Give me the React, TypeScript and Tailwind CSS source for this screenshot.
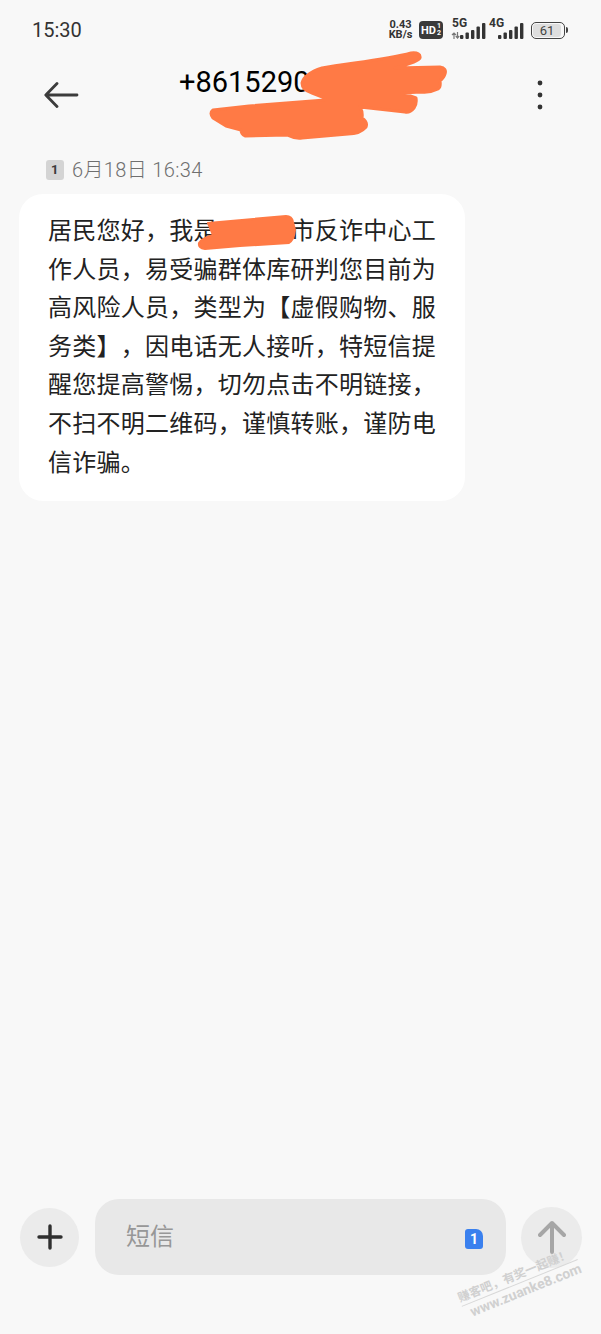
const CJK = "font-['Roboto','Noto_Sans_CJK_SC',sans-serif]";

function Bars() {
  return (
    <svg width="26" height="16" viewBox="0 0 26 16" fill="#333">
      <rect x="0" y="12" width="3.4" height="4" rx="1" />
      <rect x="5.5" y="9.5" width="3.4" height="6.5" rx="1" />
      <rect x="11" y="7" width="3.4" height="9" rx="1" />
      <rect x="16.5" y="3.5" width="3.4" height="12.5" rx="1" />
      <rect x="22" y="0" width="3.4" height="16" rx="1" />
    </svg>
  );
}

function StatusBar() {
  return (
    <div className="h-[60px] flex items-center justify-between pl-[32px] pr-[33px] shrink-0">
      <span className="text-[20px] text-[#333] font-['Roboto',sans-serif] leading-none">15:30</span>
      <div className="flex items-center h-[24px] text-[#333] font-['Roboto',sans-serif]">
        <div className="w-[25px] flex flex-col items-center text-[11px] font-bold leading-[10.5px] mr-[6px]">
          <span>0.43</span>
          <span>KB/s</span>
        </div>
        <div className="w-[24px] h-[18px] rounded-[4px] bg-[#3a3a3a] text-white flex items-center justify-center text-[11px] font-bold leading-none mr-[8px]">
          HD
          <span className="flex flex-col text-[7px] leading-[7px] ml-[1px]">
            <span>1</span>
            <span>2</span>
          </span>
        </div>
        <div className="relative w-[34px] h-[24px] mr-[4px]">
          <span className="absolute left-[1px] top-[-1px] text-[12px] font-bold leading-[12px]">5G</span>
          <svg className="absolute left-0 top-[14px]" width="9" height="7" viewBox="0 0 9 7" fill="none" stroke="#777" strokeWidth="1.2">
            <path d="M3 7V1M1 3l2-2 2 2M6.5 0v6M4.8 4l1.7 2L8.2 4" />
          </svg>
          <div className="absolute left-[9px] top-[5px]"><Bars /></div>
        </div>
        <div className="relative w-[34px] h-[24px] mr-[8px]">
          <span className="absolute left-0 top-[-1px] text-[12px] font-bold leading-[12px]">4G</span>
          <div className="absolute left-[9px] top-[5px]"><Bars /></div>
        </div>
        <div className="flex items-center">
          <div className="w-[34px] h-[17px] rounded-[5px] border border-[#444] p-[1px]">
            <div className="w-[28px] h-full rounded-[3px] bg-[#dedede] flex items-center justify-center text-[13px] leading-none text-[#444]">
              61
            </div>
          </div>
          <div className="w-[2px] h-[6px] bg-[#444] rounded-r-sm ml-[1px]" />
        </div>
      </div>
    </div>
  );
}

function Header() {
  return (
    <div className="relative h-[96px] shrink-0 flex items-start justify-between pl-[44px] pr-[57px]">
      <svg className="mt-[20px]" width="36" height="30" viewBox="0 0 36 30" fill="none" stroke="#3c3c3c" strokeWidth="2.8" strokeLinecap="round" strokeLinejoin="round">
        <path d="M33 15H2M13 3.5 1.8 15 13 26.5" />
      </svg>
      <span className="absolute left-[179px] top-[3px] text-[29px] leading-[38px] text-black font-['Roboto',sans-serif]">+8615290</span>
      <svg className="absolute left-[205px] top-[-13px]" width="246" height="95" viewBox="205 47 246 95" fill="#ff7a45" stroke="#ff7a45" strokeWidth="3" strokeLinejoin="round">
        <path d="M302 83Q304 74 322 68C350 63 385 60 411 53Q421 52 420 58Q419 62 395 68L440 67Q447 68 445 74Q444 78 440 81Q441 87 438 89Q430 93 421 92L402 93L416 98Q417 104 414 108Q410 113 405 112L360 107Q363 112 362 118Q368 122 366 127Q360 134 348 134L302 138Q295 139 287 135L245 136Q241 134 241 130L226 126L213 118Q209 113 213 110L249 106L325 100L325 98L312 93Q302 90 302 83Z" />
      </svg>
      <svg className="mt-[20px]" width="8" height="30" viewBox="0 0 8 30" fill="#333">
        <circle cx="4" cy="3" r="2.4" />
        <circle cx="4" cy="15" r="2.4" />
        <circle cx="4" cy="27" r="2.4" />
      </svg>
    </div>
  );
}

const lines = [
  "居民您好，我是　　　市反诈中心工",
  "作人员，易受骗群体库研判您目前为",
  "高风险人员，类型为【虚假购物、服",
  "务类】，因电话无人接听，特短信提",
  "醒您提高警惕，切勿点击不明链接，",
  "不扫不明二维码，谨慎转账，谨防电",
  "信诈骗。",
];

function Message() {
  return (
    <div className={`px-[19px] ${CJK}`}>
      <div className="flex items-center h-[28px] pl-[27px] mb-[10px] text-[20px] font-light tracking-[0.35px] text-[#6f6f6f]">
        <div className="w-[18px] h-[20px] rounded-[3px] bg-[#d4d4d4] flex items-center justify-center text-[13px] font-bold text-[#3a3a3a] mr-[8px]">1</div>
        <span className="leading-none">6月18日 16:34</span>
      </div>
      <div className="relative w-[446px] h-[307px] bg-white rounded-[24px] pl-[29px] pt-[18px]">
        {lines.map((l) => (
          <div key={l} className="text-[24px] leading-[38.6px] tracking-[0.25px] text-[#222] whitespace-nowrap [text-spacing-trim:space-all]">{l}</div>
        ))}
        <svg className="absolute left-[176px] top-[18px]" width="105" height="40" viewBox="195 212 105 40" fill="#ff7a45" stroke="#ff7a45" strokeWidth="2" strokeLinejoin="round">
          <path d="M208 223 286 216Q292 216 293 222L295 230Q294 240 289 243L240 246 205 249Q198 248 199 243Q202 238 213 235Z" />
        </svg>
      </div>
    </div>
  );
}

function InputBar() {
  return (
    <div className={`relative h-[76px] flex items-center px-[20px] ${CJK}`}>
      <div className="w-[59px] h-[59px] rounded-full bg-[#ebebeb] flex items-center justify-center shrink-0">
        <svg width="26" height="26" viewBox="0 0 26 26" fill="none" stroke="#2f2f2f" strokeWidth="3.4" strokeLinecap="round">
          <path d="M13 2v22M2 13h22" />
        </svg>
      </div>
      <div className="ml-[16px] w-[411px] h-[76px] rounded-[24px] bg-[#e8e8e8] flex items-center justify-between pl-[31px] pr-[23px] shrink-0">
        <span className="text-[24px] text-[#979797]">短信</span>
        <div className="w-[18px] h-[20px] rounded-[3px] rounded-tr-[7px] bg-[#3a80ee] text-white text-[14px] font-bold flex items-center justify-center mt-[4px]">1</div>
      </div>
      <div className="ml-[15px] w-[61px] h-[61px] rounded-full bg-[#ebebeb] flex items-center justify-center shrink-0">
        <svg width="28" height="34" viewBox="0 0 28 34" fill="none" stroke="#a6a6a6" strokeWidth="4" strokeLinecap="round" strokeLinejoin="round">
          <path d="M14 32V3M2 15 14 3l12 12" />
        </svg>
      </div>
    </div>
  );
}

function Watermark() {
  return (
    <div className={`absolute left-[456px] top-[1292px] -rotate-[22deg] origin-top-left flex flex-col text-[#d0d0d0] ${CJK}`}>
      <span className="text-[12px] font-bold leading-[14px] border-b border-[#d8d8d8] whitespace-nowrap pb-[1px]">赚客吧，有奖一起赚！</span>
      <span className="text-[14px] font-bold leading-[17px] whitespace-nowrap pl-[6px]">www.zuanke8.com</span>
    </div>
  );
}

export default function App() {
  return (
    <div className="relative w-[601px] h-[1334px] overflow-hidden bg-[#f8f8f8] flex flex-col">
      <StatusBar />
      <Header />
      <Message />
      <div className="flex-1" />
      <InputBar />
      <div className="h-[59px] shrink-0" />
      <Watermark />
    </div>
  );
}
